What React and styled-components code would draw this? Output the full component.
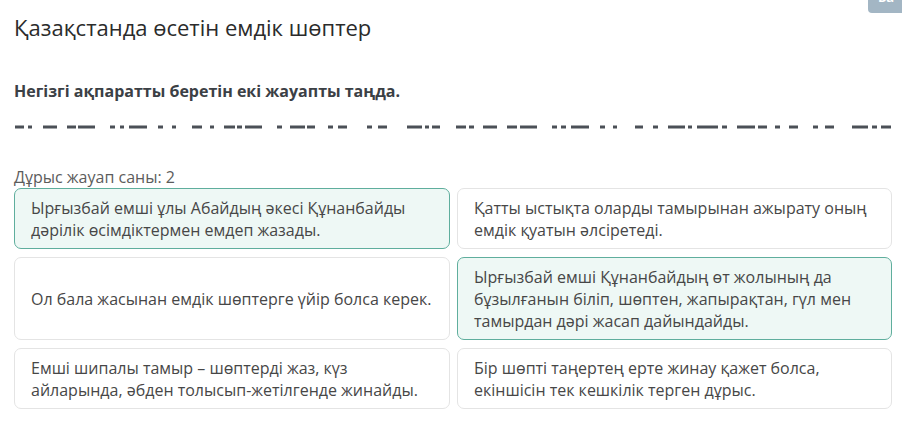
import React from "react";
import styled, { createGlobalStyle } from "styled-components";

const Global = createGlobalStyle`
  html, body { margin: 0; padding: 0; background: #ffffff; overflow: hidden; }
  body { font-family: "Open Sans", "Noto Sans", sans-serif; }
`;

const Page = styled.div`
  width: 902px;
  height: 432px;
  box-sizing: border-box;
  padding: 0 10px 0 14px;
  display: flex;
  flex-direction: column;
`;

const Header = styled.div`
  display: flex;
  justify-content: space-between;
  align-items: flex-start;
`;

const Title = styled.h1`
  margin: 14px 0 0;
  font-size: 22px;
  line-height: 26px;
  font-weight: 400;
  color: #2b2b2b;
`;

const CornerButton = styled.div`
  margin: -10px -10px 0 0;
  width: 34px;
  height: 23px;
  background: #a3b6c4;
  border-radius: 0 0 0 4px;
  color: #fff;
  font-size: 13px;
  font-weight: 700;
  padding-left: 10px;
  box-sizing: border-box;
  overflow: hidden;
  line-height: 14px;
`;

const Instruction = styled.h2`
  margin: 40px 0 0;
  font-size: 16px;
  line-height: 22px;
  font-weight: 700;
  color: #3b4045;
`;

const Redacted = styled.svg`
  display: block;
  margin: 22px 0 0 -14px;
`;

const Count = styled.div`
  margin-top: 37px;
  font-size: 16px;
  line-height: 20px;
  color: #5c5c5c;
`;

const Grid = styled.div`
  margin-top: 1px;
  display: grid;
  grid-template-columns: 436px 435px;
  column-gap: 7px;
  row-gap: 8px;
`;

const Card = styled.div`
  box-sizing: border-box;
  display: flex;
  align-items: center;
  padding: 7.5px 16px;
  min-height: 60px;
  border-radius: 7px;
  border: 1px solid ${(p) => (p.$selected ? "#5fae9d" : "#e4e4e4")};
  background: ${(p) => (p.$selected ? "#eef8f5" : "#ffffff")};
  font-size: 16px;
  line-height: 22px;
  color: #474747;
`;

const segments = [
  [15, 24], [28, 32], [43, 57], [67, 76], [78, 95], [110, 115], [120, 124],
  [129, 147], [158, 163], [172, 176], [192, 202], [210, 214], [224, 235],
  [237, 242], [245, 262], [277, 282], [290, 305], [307, 315], [328, 333],
  [338, 347], [367, 372], [378, 387], [407, 422], [425, 429], [432, 440],
  [456, 466], [469, 474], [483, 497], [507, 517], [520, 537], [552, 557],
  [561, 566], [571, 589], [600, 605], [613, 617], [635, 643], [653, 658],
  [668, 685], [688, 692], [697, 718], [722, 727], [737, 755], [758, 767],
  [775, 780], [789, 798], [813, 818], [825, 834], [852, 868], [872, 877],
  [881, 891],
];

const answers = [
  { text: "Ырғызбай емші ұлы Абайдың әкесі Құнанбайды дәрілік өсімдіктермен емдеп жазады.", selected: true },
  { text: "Қатты ыстықта оларды тамырынан ажырату оның емдік қуатын әлсіретеді.", selected: false },
  { text: "Ол бала жасынан емдік шөптерге үйір болса керек.", selected: false },
  { text: "Ырғызбай емші Құнанбайдың өт жолының да бұзылғанын біліп, шөптен, жапырақтан, гүл мен тамырдан дәрі жасап дайындайды.", selected: true },
  { text: "Емші шипалы тамыр – шөптерді жаз, күз айларында, әбден толысып-жетілгенде жинайды.", selected: false },
  { text: "Бір шөпті таңертең ерте жинау қажет болса, екіншісін тек кешкілік терген дұрыс.", selected: false },
];

export default function App() {
  return (
    <>
      <Global />
      <Page>
        <Header>
          <Title>Қазақстанда өсетін емдік шөптер</Title>
          <CornerButton>Ба</CornerButton>
        </Header>
        <Instruction>Негізгі ақпаратты беретін екі жауапты таңда.</Instruction>
        <Redacted width="902" height="6" viewBox="0 0 902 6">
          {segments.map(([a, b], i) => (
            <rect key={i} x={a} y={1.5} width={b - a} height={3} fill="#4b5057" />
          ))}
        </Redacted>
        <Count>Дұрыс жауап саны: 2</Count>
        <Grid>
          {answers.map((a, i) => (
            <Card key={i} $selected={a.selected}>{a.text}</Card>
          ))}
        </Grid>
      </Page>
    </>
  );
}
